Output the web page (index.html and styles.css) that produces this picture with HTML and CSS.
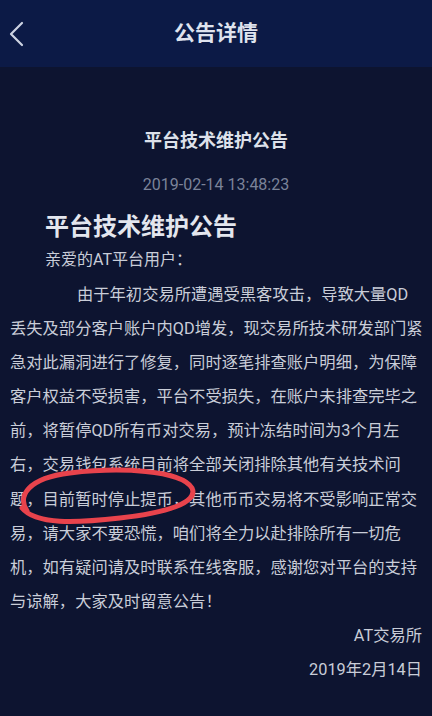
FILE: index.html
```html
<!DOCTYPE html>
<html lang="zh-CN">
<head>
<meta charset="utf-8">
<title>公告详情</title>
<link rel="stylesheet" href="styles.css">
</head>
<body>
<div class="page">
  <header class="topbar">
    <svg class="back" width="16" height="26" viewBox="0 0 16 26"><path d="M13 2 L2 13 L13 24" fill="none" stroke="#cdd3e2" stroke-width="2.2" stroke-linecap="round" stroke-linejoin="round"/></svg>
    <h1 class="topbar-title">公告详情</h1>
  </header>
  <main class="content">
    <div class="title">平台技术维护公告</div>
    <div class="date">2019-02-14 13:48:23</div>
    <h2 class="heading">平台技术维护公告</h2>
    <div class="greeting">亲爱的AT平台用户：</div>
    <div class="body">
      <div class="line indent">由于年初交易所遭遇受黑客攻击，导致大量QD</div>
      <div class="line">丢失及部分客户账户内QD增发，现交易所技术研发部门紧</div>
      <div class="line">急对此漏洞进行了修复，同时逐笔排查账户明细，为保障</div>
      <div class="line">客户权益不受损害，平台不受损失，在账户未排查完毕之</div>
      <div class="line">前，将暂停QD所有币对交易，预计冻结时间为3个月左</div>
      <div class="line">右，交易钱包系统目前将全部关闭排除其他有关技术问</div>
      <div class="line">题，目前暂时停止提币，其他币币交易将不受影响正常交</div>
      <div class="line">易，请大家不要恐慌，咱们将全力以赴排除所有一切危</div>
      <div class="line">机，如有疑问请及时联系在线客服，感谢您对平台的支持</div>
      <div class="line">与谅解，大家及时留意公告！</div>
      <div class="line right">AT交易所</div>
      <div class="line right">2019年2月14日</div>
    </div>
  </main>
  <svg class="mark" width="432" height="716" viewBox="0 0 432 716"><path d="M27 511 C17 496 28 478 70 473 C120 467 181 470 192 488 C199 503 165 513 120 518 C76 523 36 525 22 508" fill="none" stroke="#e8434c" stroke-width="5" stroke-linecap="round"/></svg>
</div>
</body>
</html>
```
FILE: styles.css
```css
html, body {
  margin: 0;
  padding: 0;
  background: #0d1430;
}
.page {
  position: relative;
  width: 432px;
  height: 716px;
  overflow: hidden;
  background: #0d1430;
  font-family: Roboto, "Noto Sans CJK SC", sans-serif;
  color: #c9cdd8;
}
.topbar {
  height: 67px;
  background: #0c1a46;
  display: flex;
  align-items: center;
  justify-content: center;
  position: relative;
}
.back {
  position: absolute;
  left: 9px;
  top: 21px;
}
.topbar-title {
  margin: 0;
  font-size: 21px;
  font-weight: 700;
  color: #dfe3ee;
  line-height: 67px;
}
.content {
  padding: 52px 10px 0 10px;
}
.title {
  text-align: center;
  font-size: 18px;
  font-weight: 700;
  line-height: 44px;
  color: #dde1ea;
}
.date {
  text-align: center;
  font-size: 16px;
  line-height: 44px;
  color: #7b8399;
}
.heading {
  margin: 0;
  padding-left: 35px;
  font-size: 24px;
  font-weight: 700;
  line-height: 40px;
  color: #e3e6ee;
}
.greeting {
  padding-left: 35px;
  font-size: 16px;
  line-height: 26px;
  color: #c9cdd8;
}
.body {
  margin-top: 5px;
  font-size: 16.3px;
  line-height: 34.1px;
  color: #c9cdd8;
}
.line {
  white-space: nowrap;
}
.indent {
  padding-left: 67px;
}
.right {
  text-align: right;
}
.mark {
  position: absolute;
  left: 0;
  top: 0;
  pointer-events: none;
}
```
